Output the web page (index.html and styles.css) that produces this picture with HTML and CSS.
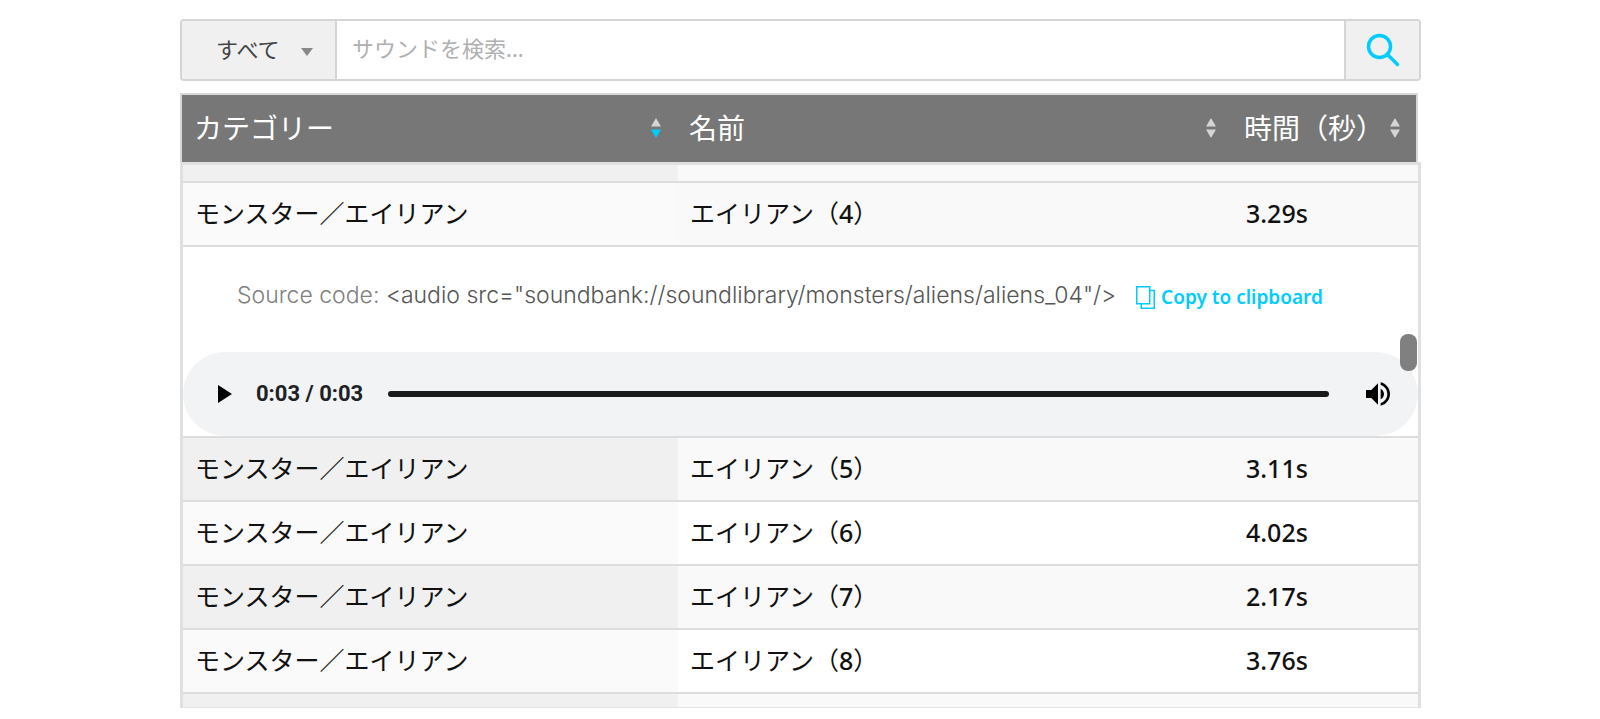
FILE: index.html
```html
<!DOCTYPE html>
<html lang="ja">
<head>
<meta charset="utf-8">
<title>サウンドライブラリ</title>
<link rel="stylesheet" href="styles.css">
</head>
<body>
<svg class="defs" aria-hidden="true">
  <symbol id="sort" viewBox="0 0 10 20"><path class="sort-up" d="M5 0l5 8.500H0z"/><path class="sort-down" d="M5 20l5-8.500H0z"/></symbol>
</svg>
<main class="page">
  <form class="search">
    <div class="filter">
      <select class="filter-select" aria-label="カテゴリー"><option>すべて</option></select>
      <svg class="filter-arrow" viewBox="0 0 12 8" aria-hidden="true"><path d="M0 0h12L6 8z"/></svg>
    </div>
    <input class="search-input" type="text" placeholder="サウンドを検索..." aria-label="サウンドを検索">
    <button class="search-button" type="button" aria-label="検索">
      <svg class="search-icon" viewBox="0 0 34 34" aria-hidden="true"><circle cx="13.500" cy="13.500" r="11"/><path d="M21.500 21.500l10 10"/></svg>
    </button>
  </form>

  <table class="grid head">
    <colgroup><col class="col-category"><col><col class="col-time"></colgroup>
    <thead>
      <tr>
        <th scope="col"><div class="head-cell">カテゴリー<svg class="sort sort-active" viewBox="0 0 10 20" aria-hidden="true"><use href="#sort"/></svg></div></th>
        <th scope="col"><div class="head-cell">名前<svg class="sort" viewBox="0 0 10 20" aria-hidden="true"><use href="#sort"/></svg></div></th>
        <th scope="col"><div class="head-cell">時間（秒）<svg class="sort" viewBox="0 0 10 20" aria-hidden="true"><use href="#sort"/></svg></div></th>
      </tr>
    </thead>
  </table>

  <div class="body">
    <table class="grid">
      <colgroup><col class="col-category"><col><col class="col-time"></colgroup>
      <tbody>
        <tr class="odd edge-top"><td></td><td></td><td></td></tr>
        <tr class="open"><td>モンスター／エイリアン</td><td>エイリアン（<span class="num">4</span>）</td><td class="num">3.29s</td></tr>
        <tr class="detail">
          <td colspan="3">
            <div class="source">
              <p class="source-text"><span class="source-label">Source code:</span> <code class="source-code">&lt;audio src="soundbank://soundlibrary/monsters/aliens/aliens_04"/&gt;</code></p>
              <button class="copy" type="button">
                <svg class="copy-icon" viewBox="0 0 19 23" aria-hidden="true"><path d="M.75.75h13v17h-13zM14 4.500h4.250v17.750h-13V18"/></svg>
                Copy to clipboard
              </button>
            </div>
            <div class="player">
              <button class="play" type="button" aria-label="再生"><svg class="play-icon" viewBox="0 0 14 18" aria-hidden="true"><path d="M0 0l14 9-14 9z"/></svg></button>
              <span class="clock">0:03 / 0:03</span>
              <input class="timeline" type="range" min="0" max="3" value="3" aria-label="再生位置">
              <button class="volume" type="button" aria-label="音量">
                <svg class="volume-icon" viewBox="3 3 18 18" aria-hidden="true"><path d="M3 9v6h4l5 5V4L7 9H3zm13.500 3c0-1.770-1.020-3.290-2.500-4.030v8.050c1.480-.73 2.500-2.250 2.500-4.020zM14 3.230v2.060c2.890.86 5 3.540 5 6.710s-2.110 5.850-5 6.710v2.060c4.010-.91 7-4.490 7-8.770s-2.990-7.860-7-8.770z"/></svg>
              </button>
            </div>
          </td>
        </tr>
        <tr class="odd"><td>モンスター／エイリアン</td><td>エイリアン（<span class="num">5</span>）</td><td class="num">3.11s</td></tr>
        <tr><td>モンスター／エイリアン</td><td>エイリアン（<span class="num">6</span>）</td><td class="num">4.02s</td></tr>
        <tr class="odd"><td>モンスター／エイリアン</td><td>エイリアン（<span class="num">7</span>）</td><td class="num">2.17s</td></tr>
        <tr><td>モンスター／エイリアン</td><td>エイリアン（<span class="num">8</span>）</td><td class="num">3.76s</td></tr>
        <tr class="odd edge-bottom"><td></td><td></td><td></td></tr>
      </tbody>
    </table>
    <div class="scroll-thumb"></div>
  </div>
</main>
</body>
</html>
```
FILE: styles.css
```css
* { box-sizing: border-box; }

body {
  margin: 0;
  background: #fff;
  color: #111;
  font-family: "Noto Sans", "Noto Sans CJK JP", sans-serif;
}

button, input, select {
  margin: 0;
  padding: 0;
  border: 0;
  background: none;
  font-family: inherit;
}

.defs { display: none; }

.page { padding: 19px 179px 11px 180px; }

/* Search bar */
.search {
  display: flex;
  height: 62px;
  margin-bottom: 12px;
  border: 2px solid #d5d5d5;
  border-radius: 4px;
  overflow: hidden;
}

.filter {
  position: relative;
  width: 155px;
  border-right: 2px solid #d5d5d5;
  background: #f0f0f0;
}

.filter-select {
  width: 100%;
  height: 100%;
  padding: 0 34px 2px;
  appearance: none;
  color: #444;
  font-size: 22px;
}

.filter-arrow {
  position: absolute;
  top: 27px;
  right: 22px;
  width: 12px;
  height: 8px;
  fill: #888;
  pointer-events: none;
}

.search-input {
  flex: 1;
  min-width: 0;
  padding: 0 15px 4px;
  font-size: 22px;
}

.search-input::placeholder { color: #b0b0b0; }

.search-button {
  display: flex;
  align-items: center;
  justify-content: center;
  width: 75px;
  border-left: 2px solid #d5d5d5;
  background: #f0f0f0;
}

.search-icon {
  width: 34px;
  height: 34px;
  fill: none;
  stroke: #0cf;
  stroke-width: 3.5;
  stroke-linecap: round;
}

/* Table */
.grid {
  width: 100%;
  table-layout: fixed;
  border-collapse: separate;
  border-spacing: 0;
}

.col-category { width: 495px; }
.col-time { width: 184px; }

.head {
  width: calc(100% - 3px);
  border: 2px solid #d8d8d8;
  border-bottom: 0;
  background: #777;
}

.head th {
  height: 67px;
  padding: 0 12px 2px;
  color: #fff;
  font-size: 28px;
  font-weight: 400;
  text-align: left;
}

.head-cell {
  display: flex;
  align-items: center;
  justify-content: space-between;
  line-height: 40px;
  white-space: nowrap;
}

.sort {
  width: 10px;
  height: 20px;
  margin-right: 4px;
  fill: #d5d5d5;
  flex: none;
}

.sort-active { --down: #0cf; }
.sort-down { fill: var(--down, #d5d5d5); }

.body {
  position: relative;
  border: 3px solid #e0e0e0;
  border-bottom: 1px solid #e4e4e4;
}

.body td {
  height: 64px;
  padding: 0 12px 2px;
  border-bottom: 2px solid #ddd;
  font-size: 25px;
  line-height: 36px;
}

.body td:first-child { background: #fafafa; }
.body .num { font-weight: 500; }
.body .odd td { background: #f9f9f9; }
.body .odd td:first-child { background: #f0f0f0; }
.body .open td { background: #f9f9f9; }
.body .open td:first-child { background: #fafafa; }
.body .edge-top td { height: 18px; }
.body .edge-bottom td { height: 13px; border-bottom: 0; }

/* Expanded row */
.body .detail td {
  height: 191px;
  padding: 0;
  background: #fff;
  vertical-align: bottom;
}

.source {
  display: flex;
  align-items: center;
  gap: 20px;
  padding: 0 54px 39px;
}

.source-text {
  margin: 0;
  padding-bottom: 4px;
  color: #555;
  font-family: Inter, sans-serif;
  font-size: 23px;
  font-weight: 300;
  line-height: 28px;
  white-space: nowrap;
}

.source-label { color: #808080; }

.source-code { font: inherit; }

.copy {
  display: flex;
  align-items: center;
  gap: 6px;
  color: #0cf;
  font-size: 19px;
  font-weight: 600;
  line-height: 28px;
  white-space: nowrap;
}

.copy-icon {
  width: 19px;
  height: 23px;
  fill: none;
  stroke: #0cf;
  stroke-width: 1.5;
}

.player {
  display: flex;
  align-items: center;
  height: 84px;
  padding: 0 28px 0 35px;
  border-radius: 42px;
  background: #f1f3f4;
}

.play-icon {
  display: block;
  width: 14px;
  height: 18px;
}

.clock {
  margin: 0 25px 0 24px;
  color: #202124;
  font-family: Roboto, sans-serif;
  font-size: 22px;
  font-weight: 700;
  line-height: 28px;
  white-space: nowrap;
}

.timeline {
  flex: 1;
  min-width: 0;
  height: 6px;
  border-radius: 3px;
  appearance: none;
  background: #1a1a1a;
}

.timeline::-webkit-slider-thumb {
  width: 1px;
  height: 1px;
  appearance: none;
}

.volume { margin-left: 37px; }

.volume-icon {
  display: block;
  width: 24px;
  height: 24px;
}

.scroll-thumb {
  position: absolute;
  top: 169px;
  right: 1px;
  width: 17px;
  height: 37px;
  border-radius: 8px;
  background: rgba(110, 110, 110, 0.88);
}
```
